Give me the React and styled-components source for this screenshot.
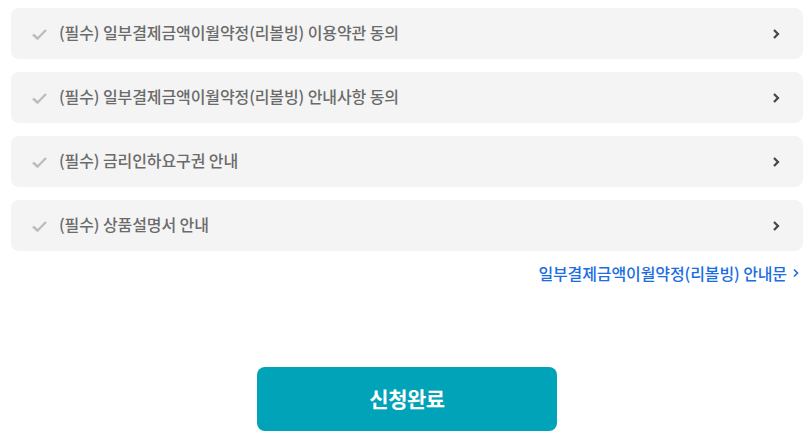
import styled, { createGlobalStyle } from 'styled-components'

const Global = createGlobalStyle`
    body {
        margin: 0;
        background: #fff;
        font-family: "Noto Sans CJK KR", "Noto Sans", sans-serif;
    }
`

const S = {}

S.Page = styled.div`
    padding: 8px 7px 0 11px;
    display: flex;
    flex-direction: column;
`
S.List = styled.ul`
    list-style: none;
    margin: 0;
    padding: 0;
    display: flex;
    flex-direction: column;
    gap: 13px;
`
S.Row = styled.li`
    height: 51px;
    background: #f4f4f4;
    border-radius: 8px;
    display: flex;
    align-items: center;
    padding: 0 22px 0 20px;
    cursor: pointer;
`
S.Check = styled.svg`
    width: 17px;
    height: 16px;
    flex: none;
    margin-right: 11px;
`
S.Label = styled.span`
    flex: 1;
    font-size: 16px;
    font-weight: 500;
    color: #6b6b6b;
    letter-spacing: -0.1px;
    margin-bottom: 3px;
`
S.Arrow = styled.svg`
    width: 10px;
    height: 12px;
    flex: none;
`
S.Guide = styled.a`
    align-self: flex-end;
    margin: 10px 4px 0 0;
    font-size: 16px;
    font-weight: 500;
    color: #1a6de3;
    text-decoration: none;
    letter-spacing: -0.1px;
    display: flex;
    align-items: center;
    gap: 6px;
`
S.Footer = styled.div`
    display: flex;
    justify-content: center;
    padding-top: 82px;
`
S.Submit = styled.button`
    width: 300px;
    height: 64px;
    border: 0;
    border-radius: 8px;
    background: #00a3b8;
    color: #fff;
    font-family: inherit;
    font-size: 21px;
    font-weight: 700;
    letter-spacing: -0.5px;
    padding-bottom: 3px;
`

const items = [
    '(필수) 일부결제금액이월약정(리볼빙) 이용약관 동의',
    '(필수) 일부결제금액이월약정(리볼빙) 안내사항 동의',
    '(필수) 금리인하요구권 안내',
    '(필수) 상품설명서 안내',
]

const App = () => (
    <>
        <Global />
        <S.Page>
            <S.List>
                {items.map((text) => (
                    <S.Row key={text}>
                        <S.Check viewBox="0 0 17 16">
                            <path d="M2 8.5 L6.5 12.5 L15 4" fill="none" stroke="#bdbdbd" strokeWidth="2.4" />
                        </S.Check>
                        <S.Label>{text}</S.Label>
                        <S.Arrow viewBox="0 0 10 12">
                            <path d="M3 2 L7 6 L3 10" fill="none" stroke="#444" strokeWidth="2.2" />
                        </S.Arrow>
                    </S.Row>
                ))}
            </S.List>
            <S.Guide href="#">
                일부결제금액이월약정(리볼빙) 안내문
                <svg width="6" height="10" viewBox="0 0 6 10">
                    <path d="M1 1.5 L4.5 5 L1 8.5" fill="none" stroke="#1a6de3" strokeWidth="1.6" />
                </svg>
            </S.Guide>
            <S.Footer>
                <S.Submit>신청완료</S.Submit>
            </S.Footer>
        </S.Page>
    </>
)

export default App
